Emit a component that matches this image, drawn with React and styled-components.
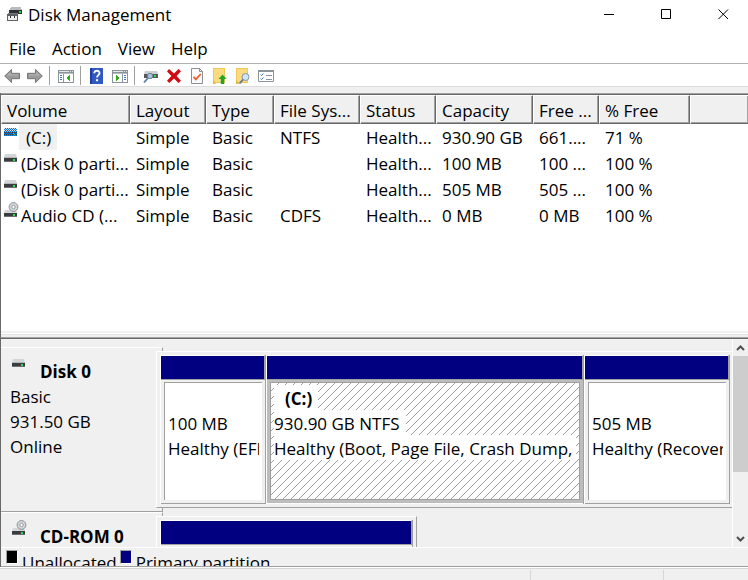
import React from 'react'
import styled, { createGlobalStyle, css } from 'styled-components'

const columns = [
    { name: 'Volume', width: 129 },
    { name: 'Layout', width: 76 },
    { name: 'Type', width: 68 },
    { name: 'File Sys...', width: 86 },
    { name: 'Status', width: 76 },
    { name: 'Capacity', width: 97 },
    { name: 'Free ...', width: 66 },
    { name: '% Free', width: 91 },
]

const volumes = [
    { icon: 'selected', name: '(C:)', cells: ['Simple', 'Basic', 'NTFS', 'Health...', '930.90 GB', '661....', '71 %'] },
    { icon: 'drive', name: '(Disk 0 parti...', cells: ['Simple', 'Basic', '', 'Health...', '100 MB', '100 ...', '100 %'] },
    { icon: 'drive', name: '(Disk 0 parti...', cells: ['Simple', 'Basic', '', 'Health...', '505 MB', '505 ...', '100 %'] },
    { icon: 'cd', name: 'Audio CD (...', cells: ['Simple', 'Basic', 'CDFS', 'Health...', '0 MB', '0 MB', '100 %'] },
]

function DriveIcon({ selected }) {
    return (
        <svg width="16" height="10" viewBox="0 0 16 10">
            <path d="M2 0h11l1 4H1z" fill="#d3d5d8" />
            <path d="M1 3h13v1H1z" fill="#b4b7ba" />
            <path d="M1 4h13v4H1z" fill="#3a3d40" />
            <path d="M1 7h13v1H1z" fill="#6c6f72" />
            <path d="M10 5h2v2h-2z" fill="#2be04a" />
            {selected && (
                <>
                    <pattern id="dots" width="2" height="2" patternUnits="userSpaceOnUse">
                        <path d="M0 0h1v1H0zM1 1h1v1H1z" fill="#0078d7" shapeRendering="crispEdges" />
                    </pattern>
                    <path d="M1 0h13v8H1z" fill="url(#dots)" />
                </>
            )}
        </svg>
    )
}

function CdIcon() {
    return (
        <svg width="16" height="16" viewBox="0 0 16 16">
            <path d="M2 8h11l1 3H1z" fill="#d3d5d8" />
            <path d="M1 11h13v4H1z" fill="#3a3d40" />
            <path d="M1 14h13v1H1z" fill="#6c6f72" />
            <path d="M10 12h2v2h-2z" fill="#2be04a" />
            <circle cx="10.5" cy="5" r="4.4" fill="#d4d7d9" stroke="#8d9194" />
            <circle cx="10.5" cy="5" r="1.7" fill="#fff" stroke="#989c9f" />
        </svg>
    )
}

function AppIcon() {
    return (
        <svg width="16" height="16" viewBox="0 0 16 16" shapeRendering="crispEdges">
            <path d="M4 1h10l1 3H3z" fill="#b9bcbf" />
            <path d="M2 4h13v4H2z" fill="#2e3033" />
            <path d="M12 5h2v2h-2z" fill="#2bd04a" />
            <path d="M1 7h10v2H1z" fill="#77797c" />
            <path d="M0 8h11v7H0z" fill="#5e6164" />
            <path d="M1 10h9v4H1z" fill="#eeeff0" />
            <path d="M3 10h1v2H3zM7 10h1v2H7z" fill="#333" />
        </svg>
    )
}

function Arrow({ forward }) {
    return (
        <svg width="16" height="16" viewBox="0 0 16 16">
            <path
                transform={forward ? 'matrix(-1 0 0 1 16 0)' : undefined}
                d="M.7 8L7.5 1.5v3.8h8v5.4h-8v3.8z"
                fill="#9a9a9a"
                stroke="#757575"
            />
            <path transform={forward ? 'matrix(-1 0 0 1 16 0)' : undefined} d="M3 7.5L6.5 4v2.4H14v1.1z" fill="#b4b4b4" />
        </svg>
    )
}

function PanelIcon({ forward }) {
    return (
        <svg width="16" height="16" viewBox="0 0 16 16" shapeRendering="crispEdges">
            <path d="M0 2h16v13H0z" fill="#8b939b" />
            <path d="M1 5h14v9H1z" fill="#fff" />
            <path d="M1 3h10v1H1zM12 3h1v1h-1zM14 3h1v1h-1z" fill="#e4e7ea" />
            <path d="M1 5h14v1H1z" fill="#b6bcc2" />
            {forward ? (
                <>
                    <path d="M10 6h1v8h-1z" fill="#8b939b" />
                    <path d="M12 7h2v1h-2zM12 9h2v1h-2zM12 11h2v1h-2z" fill="#4a7ab5" />
                    <path d="M4 7l4 3-4 3z" fill="#2faa1e" />
                </>
            ) : (
                <>
                    <path d="M5 6h1v8H5z" fill="#8b939b" />
                    <path d="M2 7h2v1H2zM2 9h2v1H2zM2 11h2v1H2z" fill="#4a7ab5" />
                    <path d="M12 7l-4 3 4 3z" fill="#2faa1e" />
                </>
            )}
        </svg>
    )
}

function HelpIcon() {
    return (
        <svg width="16" height="16" viewBox="0 0 16 16">
            <path d="M1 0h13v16H1z" fill="#3159c4" />
            <path d="M1 0h2v16H1z" fill="#1e3f9a" />
            <path d="M5.3 5.2c0-3.4 5.4-3.2 5.2 0-.1 2-2.4 2-2.4 4.3" fill="none" stroke="#fff" strokeWidth="1.9" />
            <path d="M7 11.2h2.1v2H7z" fill="#fff" />
        </svg>
    )
}

function DriveSearchIcon() {
    return (
        <svg width="16" height="16" viewBox="0 0 16 16">
            <path d="M2 3h12l1 3H1z" fill="#cbced1" />
            <path d="M1 6h14v4H1z" fill="#55595d" />
            <path d="M11 7h2v2h-2z" fill="#2be04a" />
            <circle cx="7" cy="8" r="2.7" fill="#a3c3de" stroke="#71808f" />
            <path d="M5 10l-4 4.5" stroke="#5b7ea3" strokeWidth="1.8" />
        </svg>
    )
}

function DeleteIcon() {
    return (
        <svg width="16" height="16" viewBox="0 0 16 16">
            <path d="M3 1l5 4.5L12.5 1 15 3.2 10.6 8l4.4 4.8-2.5 2.2L8 10.5 3.3 15 1 12.8 5.4 8 1 3.5z" fill="#d40a12" />
        </svg>
    )
}

function CheckDocIcon() {
    return (
        <svg width="16" height="16" viewBox="0 0 16 16">
            <path d="M2.5.5h8l3 3v12h-11z" fill="#fbfbfc" stroke="#8a8f96" />
            <path d="M10.5.5v3h3" fill="none" stroke="#8a8f96" />
            <path d="M4.5 8.8l2.3 2.6 5-5.4" fill="none" stroke="#ee5a28" strokeWidth="1.7" />
        </svg>
    )
}

function FolderIcon({ search }) {
    return (
        <svg width="16" height="16" viewBox="0 0 16 16">
            <path d="M1 0h12v15H1z" fill="#eec95a" />
            <path d="M2 1h10v13H2z" fill="#fadb7f" />
            <path d="M1 11l3 5H1z" fill="#e3b840" />
            {search ? (
                <>
                    <circle cx="10.5" cy="9" r="3.5" fill="#cfe4f5" stroke="#8496a8" />
                    <path d="M8 11.5l-3.5 4" stroke="#57789c" strokeWidth="1.8" />
                </>
            ) : (
                <path d="M10.5 6.5l4 4.5h-2.3v5H8.8v-5H6.5z" fill="#21a526" />
            )}
        </svg>
    )
}

function ListIcon() {
    return (
        <svg width="16" height="16" viewBox="0 0 16 16">
            <path d="M.5 2.5h15v11H.5z" fill="#fff" stroke="#8b939b" />
            <path d="M0 2h16v2H0z" fill="#8b939b" />
            <path d="M2.5 6.5l1 1 2-2M2.5 10.5l1 1 2-2" fill="none" stroke="#2b78c5" />
            <path d="M8 7h6v1H8zM8 11h6v1H8z" fill="#8b939b" />
        </svg>
    )
}

function Hatch() {
    return (
        <HatchSvg width="100%" height="100%">
            <pattern id="hatch" width="8" height="8" patternUnits="userSpaceOnUse">
                <path
                    d="M7 0h1v1H7zM6 1h1v1H6zM5 2h1v1H5zM4 3h1v1H4zM3 4h1v1H3zM2 5h1v1H2zM1 6h1v1H1zM0 7h1v1H0z"
                    fill="#a0a0a0"
                    shapeRendering="crispEdges"
                />
            </pattern>
            <rect width="100%" height="100%" fill="url(#hatch)" />
        </HatchSvg>
    )
}

function Partition({ selected, title, size, status }) {
    return (
        <PartitionBox>
            <Bar />
            <PartitionBody $selected={selected}>
                <PartitionInner $selected={selected}>
                    {selected && <Hatch />}
                    <Lines>
                        <Line $bold>{title}</Line>
                        <Line>{size}</Line>
                        <Line>{status}</Line>
                    </Lines>
                </PartitionInner>
            </PartitionBody>
        </PartitionBox>
    )
}

export default function App() {
    return (
        <Window>
            <GlobalStyle />
            <TitleBar>
                <AppIcon />
                <Title>Disk Management</Title>
                <Caption aria-label="Minimize">
                    <svg width="11" height="11"><path d="M0 5.5h10" stroke="#000" /></svg>
                </Caption>
                <Caption aria-label="Maximize">
                    <svg width="11" height="11"><path d="M.5.5h9v9h-9z" fill="none" stroke="#000" /></svg>
                </Caption>
                <Caption aria-label="Close">
                    <svg width="11" height="11"><path d="M.5.5l9.500 9.500M10 .5L.5 10" stroke="#000" /></svg>
                </Caption>
            </TitleBar>
            <Menu>
                <MenuItem>File</MenuItem>
                <MenuItem>Action</MenuItem>
                <MenuItem>View</MenuItem>
                <MenuItem>Help</MenuItem>
            </Menu>
            <Toolbar>
                <Tool aria-label="Back"><Arrow /></Tool>
                <Tool aria-label="Forward"><Arrow forward /></Tool>
                <Separator />
                <Tool aria-label="Show console tree"><PanelIcon /></Tool>
                <Separator />
                <Tool aria-label="Help"><HelpIcon /></Tool>
                <Tool aria-label="Show action pane"><PanelIcon forward /></Tool>
                <Separator />
                <Tool aria-label="Rescan disks"><DriveSearchIcon /></Tool>
                <Tool aria-label="Delete"><DeleteIcon /></Tool>
                <Tool aria-label="Properties"><CheckDocIcon /></Tool>
                <Tool aria-label="Open"><FolderIcon /></Tool>
                <Tool aria-label="Explore"><FolderIcon search /></Tool>
                <Tool aria-label="View settings"><ListIcon /></Tool>
            </Toolbar>

            <Frame>
                <VolumeList>
                    <Table>
                        <colgroup>
                            {columns.map((c) => <Col key={c.name} $width={c.width} />)}
                            <col />
                        </colgroup>
                        <thead>
                            <tr>
                                {columns.map((c) => <Th key={c.name}>{c.name}</Th>)}
                                <Th />
                            </tr>
                        </thead>
                        <tbody>
                            {volumes.map((v, i) => (
                                <tr key={i}>
                                    <NameCell>
                                        <VolumeName $selected={v.icon === 'selected'} $cd={v.icon === 'cd'}>
                                            {v.icon === 'cd' ? <CdIcon /> : <DriveIcon selected={v.icon === 'selected'} />}
                                            <span>{v.name}</span>
                                        </VolumeName>
                                    </NameCell>
                                    {v.cells.map((cell, j) => <Td key={j}>{cell}</Td>)}
                                    <Td />
                                </tr>
                            ))}
                        </tbody>
                    </Table>
                </VolumeList>
                <Splitter />

                <LowerPane>
                    <DiskList>
                        <Disk>
                            <DiskLabel>
                                <DiskName><DriveIcon /><b>Disk 0</b></DiskName>
                                <div>Basic</div>
                                <div>931.50 GB</div>
                                <div>Online</div>
                            </DiskLabel>
                            <Partitions $columns="106px minmax(0, 1fr) 146px">
                                <Partition size="100 MB" status="Healthy (EFI" />
                                <Partition selected title="(C:)" size="930.90 GB NTFS" status="Healthy (Boot, Page File, Crash Dump," />
                                <Partition size="505 MB" status="Healthy (Recovery" />
                            </Partitions>
                        </Disk>
                        <Disk>
                            <DiskLabel>
                                <DiskName $cd><CdIcon /><b>CD-ROM 0</b></DiskName>
                            </DiskLabel>
                            <Partitions $short $columns="253px">
                                <Partition />
                            </Partitions>
                        </Disk>
                    </DiskList>
                    <Scrollbar>
                        <Arrowhead aria-label="Scroll up">
                            <svg width="9" height="6"><path d="M1 5l3.5-3.5L8 5" fill="none" stroke="#505050" strokeWidth="2" /></svg>
                        </Arrowhead>
                        <Thumb />
                        <Arrowhead aria-label="Scroll down">
                            <svg width="9" height="6"><path d="M1 1l3.5 3.5L8 1" fill="none" stroke="#505050" strokeWidth="2" /></svg>
                        </Arrowhead>
                    </Scrollbar>
                </LowerPane>
                <Legend>
                    <Swatch $color="#000" />
                    <span>Unallocated</span>
                    <Swatch $color="#000080" />
                    <span>Primary partition</span>
                </Legend>
            </Frame>
            <StatusBar>
                <StatusPart />
                <StatusPart $width={133} />
                <StatusPart $width={85} />
            </StatusBar>
        </Window>
    )
}

const GlobalStyle = createGlobalStyle`
    *{ box-sizing: border-box; }
    body{
        margin:0;
        background:#fff;
        color:#000;
        font-family:"Open Sans", "Noto Sans", sans-serif;
        font-size:17px;
        line-height:25px;
    }
    svg{
        display:block;
        flex:none;
    }
    button{
        border:0;
        padding:0;
        background:none;
        font:inherit;
        color:inherit;
    }
`

const Window = styled.div`
    display:flex;
    flex-direction:column;
    height:100vh;
    overflow:hidden;
`
const TitleBar = styled.header`
    display:flex;
    height:30px;
    padding-left:7px;
    margin-right:-4px;
    & > svg{ margin-top:6px; }
`
const Title = styled.h1`
    flex:1;
    margin:0;
    padding:2px 0 0 5px;
    font-size:17px;
    font-weight:400;
`
const Caption = styled.button`
    display:flex;
    align-items:center;
    justify-content:center;
    width:57px;
    height:29px;
`
const Menu = styled.nav`
    display:flex;
    gap:16px;
    height:33px;
    padding:6px 9px 0;
`
const MenuItem = styled.button`
    height:25px;
    white-space:nowrap;
`
const Toolbar = styled.div`
    display:flex;
    height:24px;
    border-top:1px solid #b0b0b6;
    border-bottom:1px solid #dcdcdc;
`
const Tool = styled.button`
    width:23px;
    padding:1px 3px 0 4px;
`
const Separator = styled.span`
    width:8px;
    margin:2px 0 1px;
    background:linear-gradient(#a0a0a0, #a0a0a0) 3px 0 / 1px 100% no-repeat;
`

const Frame = styled.main`
    flex:1;
    min-height:0;
    display:flex;
    flex-direction:column;
    border-top:6px solid #f0f0f0;
    background:linear-gradient(#696969, #696969) 0 0 / 1px 100% no-repeat;
    padding-left:1px;
`
const VolumeList = styled.section`
    flex:1;
    min-height:0;
    overflow:hidden;
    border-top:1px solid #a0a0a0;
    box-shadow:inset 0 1px #696969;
    padding-top:1px;
`
const Table = styled.table`
    width:100%;
    table-layout:fixed;
    border-collapse:separate;
    border-spacing:0;
`
const Col = styled.col`
    width:${(p) => p.$width}px;
`
const cell = css`
    padding:0 0 0 6px;
    overflow:hidden;
    white-space:nowrap;
    text-align:left;
    font-weight:400;
`
const Th = styled.th`
    ${cell}
    height:29px;
    background:#f0f0f0;
    border:1px solid #696969;
    border-top-color:#fff;
    border-left-color:#fff;
    padding:2px 0 0 5px;
    box-shadow:inset -1px -1px #a0a0a0;
    &:last-child{ border-right:0; }
`
const Td = styled.td`
    ${cell}
    height:26px;
`
const NameCell = styled.td`
    height:26px;
    padding:0 0 0 2px;
    overflow:hidden;
`
const VolumeName = styled.div`
    display:flex;
    height:26px;
    white-space:nowrap;
    svg{ margin-top:${(p) => (p.$cd ? 0 : 4)}px; }
    span{
        margin-left:${(p) => (p.$selected ? 0 : 2)}px;
        padding:${(p) => (p.$selected ? '1px 6px 0 7px' : '1px 0 0')};
        background:${(p) => (p.$selected ? '#f0f0f0' : 'none')};
    }
`
const Splitter = styled.div`
    height:8px;
    background:#f0f0f0;
    border-bottom:1px solid #696969;
    box-shadow:inset 0 -1px #a0a0a0, inset 0 2px #f0f0f0, inset 0 3px #fff, inset 0 4px #e3e3e3;
`

const LowerPane = styled.section`
    display:flex;
    height:208px;
    overflow:hidden;
    background:#f0f0f0;
`
const DiskList = styled.div`
    flex:1;
    min-width:0;
    padding-top:8px;
`
const Disk = styled.div`
    display:flex;
    align-items:flex-start;
`
const DiskLabel = styled.div`
    flex:none;
    width:162px;
    height:165px;
    padding:7px 0 0 9px;
    border-top:1px solid #fff;
    border-right:1px solid #a0a0a0;
    border-bottom:1px solid #a0a0a0;
`
const DiskName = styled.div`
    display:flex;
    height:29px;
    padding-left:1px;
    svg{ margin-top:${(p) => (p.$cd ? 0 : 4)}px; }
    b{ padding:4px 0 0 13px; }
`
const Partitions = styled.div`
    flex:${(p) => (p.$short ? 'none' : 1)};
    min-width:0;
    display:grid;
    grid-template-columns:${(p) => p.$columns};
    height:157px;
    margin:4px 0 0 -7px;
    padding:3px ${(p) => (p.$short ? 3 : 2)}px 3px 3px;
    background:#f0f0f0;
    border:1px solid #fff;
    border-bottom-color:#a0a0a0;
    border-right:${(p) => (p.$short ? '1px solid #a0a0a0' : 0)};
`
const PartitionBox = styled.div`
    display:flex;
    flex-direction:column;
    min-width:0;
    height:149px;
    border-left:1px solid #fff;
    border-right:1px solid #a0a0a0;
`
const Bar = styled.div`
    height:25px;
    background:#000080;
    border:1px solid #a0a0a0;
    border-top-color:#fff;
    border-left:0;
`
const PartitionBody = styled.div`
    flex:1;
    min-height:0;
    padding:2px 3px 3px;
    border-bottom:1px solid ${(p) => (p.$selected ? '#fff' : '#a0a0a0')};
    background:${(p) => (p.$selected ? '#bdbdbd' : '#f0f0f0')};
`
const PartitionInner = styled.div`
    position:relative;
    height:100%;
    padding:2px 3px 0;
    overflow:hidden;
    background:#fff;
    border:0 solid #a0a0a0;
    border-width:${(p) => (p.$selected ? '1px' : '1px 0 0 1px')};
`
const HatchSvg = styled.svg`
    position:absolute;
    top:0;
    left:0;
`
const Lines = styled.div`
    position:relative;
    overflow:hidden;
`
const Line = styled.div`
    width:fit-content;
    height:25px;
    padding:1px 6px 0 0;
    white-space:nowrap;
    background:#fff;
    ${(p) => p.$bold && 'font-weight:700; padding-left:11px;'}
`

const Scrollbar = styled.div`
    display:flex;
    flex-direction:column;
    width:16px;
    border-left:1px solid #fff;
`
const Arrowhead = styled.button`
    display:flex;
    align-items:center;
    justify-content:center;
    height:17px;
`
const Thumb = styled.div`
    height:116px;
    margin-bottom:auto;
    background:#cdcdcd;
`

const Legend = styled.footer`
    display:flex;
    height:20px;
    padding:2px 0 0 5px;
    overflow:hidden;
    white-space:nowrap;
    background:#f0f0f0;
    border-top:1px solid #fff;
    border-bottom:1px solid #a0a0a0;
    span{ padding:0 3px 0 4px; }
`
const Swatch = styled.i`
    flex:none;
    width:12px;
    height:14px;
    background:${(p) => p.$color};
    border:1px solid #a0a0a0;
    border-right-color:#fff;
    border-bottom-color:#fff;
`
const StatusBar = styled.div`
    display:flex;
    height:13px;
    background:#f0f0f0;
    border-top:1px solid #fff;
    box-shadow:inset 0 1px #d7d7d7;
    padding-top:2px;
`
const StatusPart = styled.div`
    flex:${(p) => (p.$width ? `0 0 ${p.$width}px` : 1)};
    & + &{ border-left:1px solid #d7d7d7; }
`
